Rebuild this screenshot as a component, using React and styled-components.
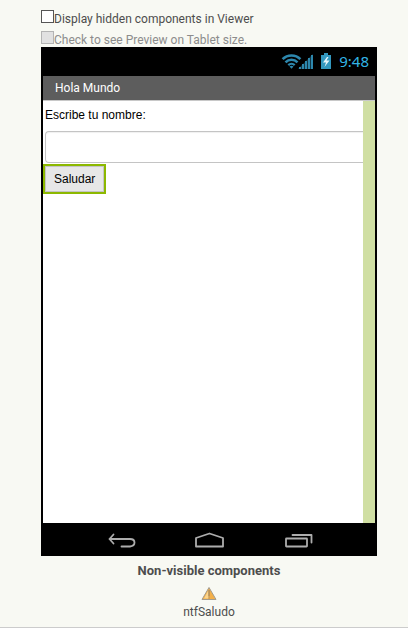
import React from "react";
import styled, { createGlobalStyle } from "styled-components";

const Global = createGlobalStyle`
  *, *::before, *::after { box-sizing: border-box; }
  body {
    margin: 0;
    background: #f8f9f3;
    color: #4d4d4d;
    font: 12px/15px Roboto, sans-serif;
  }
`;

const Viewer = styled.main`
  display: flex;
  flex-direction: column;
  padding: 5px 31px 7px 41px;
  border-bottom: 1px solid #ccc;
`;

const Option = styled.div`
  display: flex;
  align-items: flex-end;
  height: 21px;
  color: ${(p) => (p.$muted ? "#8c8c8c" : "#4d4d4d")};
  line-height: 13px;
`;

const Checkbox = styled.input`
  appearance: none;
  width: 13px;
  height: 13px;
  margin: 0 0 3px;
  border: 1px solid #555;
  background: #fff;

  &:checked { background: #555; }
  &:disabled { border-color: #b4b4b4; background: #e1e1e1; }
`;

const Phone = styled.section`
  display: flex;
  flex-direction: column;
  border: solid #000;
  border-width: 0 2px;
  background: #fff;
`;

const StatusBar = styled.div`
  display: flex;
  align-items: center;
  justify-content: flex-end;
  height: 29px;
  padding: 0 6px 2px 0;
  background: #000;
  color: #33b5e5;
`;

const StatusIcons = styled.svg`
  width: 52px;
  height: 18px;
  margin-right: 6px;
`;

const Clock = styled.time`
  font-family: "Noto Sans", sans-serif;
  font-size: 15px;
  line-height: 18px;
`;

const TitleBar = styled.h1`
  margin: 0;
  padding: 0 12px;
  height: 25px;
  border-bottom: 1px solid #c8c8c8;
  background: #5d5d5d;
  color: #fff;
  font-size: 12px;
  font-weight: 400;
  line-height: 24px;
`;

const Screen = styled.div`
  display: flex;
  min-height: 422px;
`;

const Form = styled.form`
  flex: 1;
  min-width: 0;
  display: flex;
  flex-direction: column;
  align-items: flex-start;
  overflow: hidden;
  color: #000;
  font-family: "Liberation Sans", Arial, sans-serif;
`;

const FieldLabel = styled.label`
  padding: 7px 2px 8px;
`;

const TextField = styled.input`
  align-self: stretch;
  height: 32px;
  margin: 0 0 0 2px;
  padding: 0 8px;
  border: 1px solid #c4c4c4;
  border-right: 0;
  border-radius: 4px 0 0 4px;
  background: #fff;
  box-shadow: inset 0 1px 1px #f0f0f0;
  font: inherit;
`;

const GreetButton = styled.button`
  height: 30px;
  margin-top: 1px;
  padding: 0 9px;
  border: 2px solid #8cb800;
  box-shadow: inset 0 0 0 1px #c4c4c4;
  background: #e7e7e7;
  color: #000;
  font: inherit;
`;

const ScrollTrack = styled.div`
  width: 12px;
  background: #d0dfa3;
`;

const NavBar = styled.nav`
  display: flex;
  justify-content: center;
  gap: 56px;
  height: 33px;
  background: #000;
`;

const NavButton = styled.button`
  display: flex;
  align-items: center;
  justify-content: center;
  width: 34px;
  padding: 0;
  border: 0;
  background: none;
  color: #adadad;
`;

const NavIcon = styled.svg`
  width: 34px;
  height: 20px;
  fill: none;
  stroke: currentColor;
  stroke-width: 1.8;
  stroke-linejoin: round;
  stroke-linecap: round;
`;

const Hidden = styled.section`
  display: flex;
  flex-direction: column;
  align-items: center;
  padding-top: 7px;
`;

const HiddenTitle = styled.h2`
  margin: 0;
  font-size: 13px;
  font-weight: 700;
  line-height: 16px;
`;

const Component = styled.div`
  display: flex;
  flex-direction: column;
  align-items: center;
  padding-top: 7px;
  gap: 3px;
`;

const WarningIcon = styled.svg`
  width: 16px;
  height: 16px;
`;

function Status() {
  return (
    <StatusIcons viewBox="0 0 52 18" aria-hidden="true">
      <g fill="none" stroke="#2d87ad" strokeWidth="2.6">
        <path d="M1.600 7.200A12.500 12.500 0 0 1 19.400 7.200" />
        <path d="M4.500 10.300A8.500 8.500 0 0 1 16.500 10.300" />
        <path d="M7.300 13.100A4.600 4.600 0 0 1 13.700 13.100" strokeWidth="2.200" />
      </g>
      <path d="M8.500 14.600Q10.500 13 12.500 14.600L10.500 16.700Z" fill="#2d87ad" />
      <path d="M18 17v-2h2v2zM21 17v-5h2v5zM24 17V9h2v8zM27 17V6h2v11zM30 17V3h2v14z" fill="#2d87ad" />
      <path d="M17 17L32 2v15z" fill="#2d87ad" opacity="0.4" />
      <path d="M43 1h4v2h3v14H40V3h3z" fill="#3398bf" />
      <path d="M46 5l-4 5.500h3L43.500 15l5-6.500h-3l2-3.500z" fill="#e6f5fa" />
    </StatusIcons>
  );
}

export default function App() {
  return (
    <>
      <Global />
      <Viewer>
        <Option>
          <Checkbox type="checkbox" id="hidden-components" />
          <label htmlFor="hidden-components">Display hidden components in Viewer</label>
        </Option>
        <Option $muted>
          <Checkbox type="checkbox" id="tablet-preview" disabled />
          <label htmlFor="tablet-preview">Check to see Preview on Tablet size.</label>
        </Option>
        <Phone>
          <StatusBar>
            <Status />
            <Clock>9:48</Clock>
          </StatusBar>
          <TitleBar>Hola Mundo</TitleBar>
          <Screen>
            <Form onSubmit={(e) => e.preventDefault()}>
              <FieldLabel htmlFor="nombre">Escribe tu nombre:</FieldLabel>
              <TextField id="nombre" type="text" />
              <GreetButton type="submit">Saludar</GreetButton>
            </Form>
            <ScrollTrack />
          </Screen>
          <NavBar>
            <NavButton aria-label="Back">
              <NavIcon viewBox="0 0 34 20">
                <path d="M11.500 4.500l-4 4.500 4 4.500M7.500 9H28q4.500 0 4.500 3.500T28 16.500H19.500" />
              </NavIcon>
            </NavButton>
            <NavButton aria-label="Home">
              <NavIcon viewBox="0 0 34 20">
                <path d="M4 16.500V8L17.500 3.500 31 8v8.500z" />
              </NavIcon>
            </NavButton>
            <NavButton aria-label="Recent apps">
              <NavIcon viewBox="0 0 34 20">
                <rect x="4" y="8.500" width="21" height="8" rx="0.500" />
                <path d="M10.500 5h19v7.500" />
              </NavIcon>
            </NavButton>
          </NavBar>
        </Phone>
        <Hidden>
          <HiddenTitle>Non-visible components</HiddenTitle>
          <Component>
            <WarningIcon viewBox="0 0 16 16" aria-hidden="true">
              <path d="M8 1.500L1 13.500h14z" fill="#f3b04a" stroke="#a39c8e" strokeLinejoin="round" />
              <path d="M7.500 4L3 12.500h4.500z" fill="#fbd58e" />
              <path d="M8 4v6.500M8 11.500v1" stroke="#8a7860" strokeWidth="1" />
            </WarningIcon>
            <span>ntfSaludo</span>
          </Component>
        </Hidden>
      </Viewer>
    </>
  );
}
